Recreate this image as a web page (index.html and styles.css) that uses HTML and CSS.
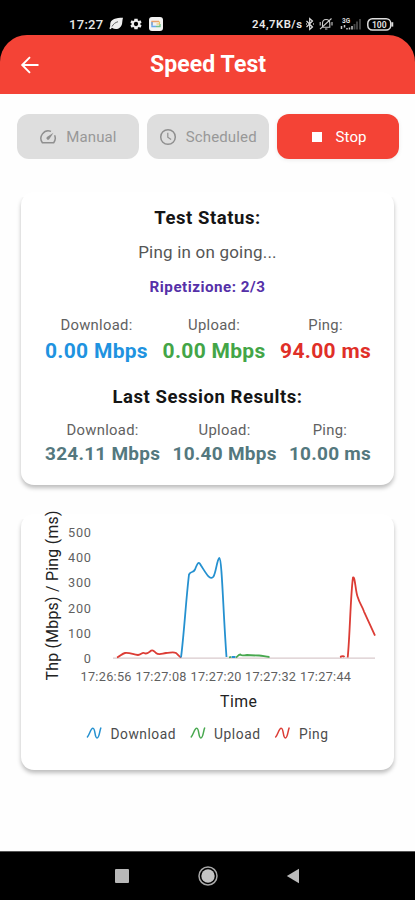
FILE: index.html
```html
<!DOCTYPE html>
<html lang="en">
<head>
<meta charset="utf-8">
<title>Speed Test</title>
<link rel="stylesheet" href="styles.css">
</head>
<body>
<div class="phone">
  <div class="statusbar">
    <div class="status-left">
      <span class="clock">17:27</span>
      <svg class="leaf" width="15" height="14" viewBox="0 0 15 14"><path d="M14 .8C7 .8 1.500 2 1.200 7.500c0 1.300.2 1.800-.9 4l1.500.7 1-1.500c4.500 2.700 9.500.7 10.300-4.300.3-1.800.3-3.500.9-5.600z" fill="#eee"/><path d="M3 9.500C4.300 7 6.300 5.500 9 4.700" stroke="#444" stroke-width=".8" fill="none"/></svg>
      <svg class="gear" width="14" height="14" viewBox="0 0 24 24"><path fill="#eee" fill-rule="evenodd" d="M19.400 13a7.500 7.500 0 0 0 0-2l2.200-1.700-2-3.600-2.700 1.100a8 8 0 0 0-1.700-1L14.800 3H9.200l-.4 2.800a8 8 0 0 0-1.700 1L4.400 5.700l-2 3.600L4.600 11a7.500 7.500 0 0 0 0 2l-2.200 1.700 2 3.600 2.700-1.100a8 8 0 0 0 1.700 1l.4 2.800h5.600l.4-2.800a8 8 0 0 0 1.700-1l2.700 1.100 2-3.600zM12 15.700a3.700 3.700 0 1 1 0-7.400 3.700 3.700 0 0 1 0 7.400z"/></svg>
      <svg class="app" width="14" height="14" viewBox="0 0 14 14"><rect width="14" height="14" rx="3" fill="#f2f2f2"/><path d="M3 8V4.500h7" stroke="#e9a06a" stroke-width="1.400" fill="none"/><path d="M3 5v4.500h4" stroke="#66a8ee" stroke-width="1.400" fill="none"/><path d="M7 9.500h4V7" stroke="#71c28c" stroke-width="1.400" fill="none"/><path d="M10.500 4.500V7H7.500" stroke="#e8c461" stroke-width="1.200" fill="none"/></svg>
    </div>
    <div class="status-right">
      <span class="rate">24,7KB/s</span>
      <svg class="bt" width="10" height="14" viewBox="0 0 10 14"><path d="M1.500 4l6 6L4.700 12.500v-11L7.500 4l-6 6" stroke="#ddd" stroke-width="1.200" fill="none"/><path d="M1 7h.8M8.200 7H9" stroke="#ddd" stroke-width="1.300"/></svg>
      <svg class="mute" width="14" height="14" viewBox="0 0 14 14"><path d="M3.500 10.200h7.300V6.500C10.800 3.800 9 2.500 7.100 2.500S3.500 3.800 3.500 6.500zM6 12h2.400M1 12.200L12.500 1.500M1.200 5v3.500M13 5v3.500" stroke="#ccc" stroke-width="1.100" fill="none"/></svg>
      <svg class="signal" width="22" height="14" viewBox="0 0 22 14"><text x="2" y="5.800" class="net">3G</text><path d="M1.500 9v3M4.500 8v2.500M7 11v1.500M9.500 10.500v2M12 9v3.500" stroke="#ccc" stroke-width="1.500"/><path d="M14.500 7v5.500M17 4.500v8M20 2v10.500" stroke="#444" stroke-width="1.900"/></svg>
      <svg class="battery" width="27" height="13" viewBox="0 0 27 13"><rect x=".8" y=".8" width="22.900" height="11.200" rx="4.500" fill="none" stroke="#ddd" stroke-width="1.500"/><path d="M25.300 4.200v4.400" stroke="#ddd" stroke-width="1.900"/><text x="12.200" y="9.700" class="pct">100</text></svg>
    </div>
  </div>

  <header class="appbar">
    <svg class="back" width="20" height="20" viewBox="0 0 20 20"><path d="M18.500 10H2.500M10 2.200L2.200 10l7.800 7.800" fill="none" stroke="#fff" stroke-width="1.900"/></svg>
    <h1>Speed Test</h1>
  </header>

  <main>
    <div class="actions">
      <button class="btn off"><svg width="18" height="18" viewBox="0 0 18 18"><path d="M15.600 7.200a7.400 7.400 0 0 1-.9 7.500H3.400A7.400 7.400 0 0 1 12 3.400" fill="none" stroke="#8f8f8f" stroke-width="1.500" stroke-linejoin="round"/><path d="M14.500 4.800L10.200 11.200a1.500 1.500 0 0 1-2.300-2.200z" fill="#8f8f8f"/></svg><span>Manual</span></button>
      <button class="btn off"><svg width="18" height="18" viewBox="0 0 18 18"><circle cx="9" cy="9" r="7.300" fill="none" stroke="#8f8f8f" stroke-width="1.500"/><path d="M8.800 4.800v4.500l3.300 2.200" fill="none" stroke="#8f8f8f" stroke-width="1.200"/></svg><span>Scheduled</span></button>
      <button class="btn stop"><i class="square"></i><span>Stop</span></button>
    </div>

    <section class="card status">
      <h2>Test Status:</h2>
      <p class="message">Ping in on going...</p>
      <p class="repeat">Ripetizione: 2/3</p>
      <div class="metrics live">
        <div><span class="label">Download:</span><b class="down">0.00 Mbps</b></div>
        <div><span class="label">Upload:</span><b class="up">0.00 Mbps</b></div>
        <div><span class="label">Ping:</span><b class="ping">94.00 ms</b></div>
      </div>
      <h2 class="last-title">Last Session Results:</h2>
      <div class="metrics last">
        <div><span class="label">Download:</span><b>324.11 Mbps</b></div>
        <div><span class="label">Upload:</span><b>10.40 Mbps</b></div>
        <div><span class="label">Ping:</span><b>10.00 ms</b></div>
      </div>
    </section>

    <section class="card chart">
      <svg width="373" height="256" viewBox="21 514.500 373 256">
        <text class="axis-title" transform="translate(57.500 681) rotate(-90)" textLength="170">Thp (Mbps) / Ping (ms)</text>
        <g class="ticks-y">
          <text x="91" y="537.500" textLength="23">500</text>
          <text x="91" y="562.700" textLength="23">400</text>
          <text x="91" y="587.900" textLength="23">300</text>
          <text x="91" y="613.100" textLength="23">200</text>
          <text x="91" y="638.300" textLength="23">100</text>
          <text x="91" y="663.500">0</text>
        </g>
        <path class="axis" d="M113 658.600H375"/>
        <path class="line red" d="M117 658C120 657 122 654 125 653.500C130 653 133 655 138 655.500C141 655 142 653 144 653.500C147 655 148 653.500 150 652C152 650 154 651 156 653.500C159 656 162 654 166 653.500C170 653.500 173 652 176 653.500C178 655 179 657 181 658"/>
        <path class="line blue" d="M181 658C184 635 186 600 189 575C191 571 193 574 195 570C198 562 199 562 201 566C205 572 210 582 213.500 577C216 573 217 560 219.300 558.500C222 559 223 610 226.500 657.500M231.500 657.500h4"/>
        <path class="line green" d="M229 658L231 657.300M236 658C238 657 238 655 240.500 655C242 657 244 655.500 247 655.500C251 656 255 656 259 656C263 656 265 657.500 269.500 657.500"/>
        <path class="line red" d="M340 657.500C342 657 343 655.500 344.500 657.500M347.700 658C350 635 350.500 595 353 578C355 576 355.500 592 357.500 597C360 605 362 606 364 612L375 636"/>
        <g class="ticks-x">
          <text x="106" y="681" textLength="51">17:26:56</text>
          <text x="161" y="681" textLength="51">17:27:08</text>
          <text x="216" y="681" textLength="51">17:27:20</text>
          <text x="270.500" y="681" textLength="51">17:27:32</text>
          <text x="325.500" y="681" textLength="51">17:27:44</text>
        </g>
        <text class="axis-title" x="220" y="707" textLength="37">Time</text>
        <g class="marks">
          <path class="blue" d="M87 738C89.500 736 90.500 728.500 93 728.800C95.500 729 94.500 738.500 97 738.500C99.500 738.500 99.500 731 101 728"/>
          <path class="green" d="M190.800 738C193.300 736 194.300 728.500 196.800 728.800C199.300 729 198.300 738.500 200.800 738.500C203.300 738.500 203.300 731 204.800 728"/>
          <path class="red" d="M275.300 738C277.800 736 278.800 728.500 281.300 728.800C283.800 729 282.800 738.500 285.300 738.500C287.800 738.500 287.800 731 289.300 728"/>
        </g>
        <g class="legend">
          <text x="110.500" y="739" textLength="65">Download</text>
          <text x="214" y="739" textLength="46">Upload</text>
          <text x="299" y="739" textLength="29">Ping</text>
        </g>
      </svg>
    </section>
  </main>

  <nav class="navbar">
    <svg width="14" height="14" viewBox="0 0 14 14"><rect width="14" height="14" rx="1" fill="#b8b8b8"/></svg>
    <svg width="20" height="20" viewBox="0 0 20 20"><circle cx="10" cy="10" r="9" fill="none" stroke="#a8a8a8" stroke-width="1.500"/><circle cx="10" cy="10" r="6.700" fill="#c4c4c4"/></svg>
    <svg width="14" height="16" viewBox="0 0 14 16"><path d="M.8 8L13 .8v14.400z" fill="#bbb"/></svg>
  </nav>
</div>
</body>
</html>
```

FILE: styles.css
```css
* { box-sizing: border-box; margin: 0; padding: 0; }
body { width: 415px; height: 900px; background: #000; font-family: Roboto, sans-serif; overflow: hidden; }
svg { display: block; flex: none; }
.phone { width: 415px; height: 900px; display: flex; flex-direction: column; }

.statusbar { height: 35px; padding: 12px 21px 0 69px; display: flex; justify-content: space-between; color: #e8e8e8; }
.status-left, .status-right { display: flex; align-items: center; height: 24px; }
.clock { font-size: 13px; font-weight: 500; letter-spacing: .3px; width: 40px; }
.gear { margin-left: 5px; }
.app { margin-left: 6px; }
.rate { font-size: 11.300px; font-weight: 600; letter-spacing: .5px; width: 53px; white-space: nowrap; }
.mute { margin-left: 4px; }
.signal { margin-left: 7px; }
.battery { margin-left: 5px; }
.net { font-size: 6.500px; font-weight: 700; fill: #ddd; }
.pct { font-size: 8.500px; font-weight: 700; fill: #ddd; text-anchor: middle; }

.appbar { height: 59px; flex: none; background: #f44336; border-radius: 27px 27px 0 0; display: flex; align-items: center; padding-left: 20px; }
.back { margin-right: 110px; }
h1 { font-size: 23px; line-height: 30px; font-weight: 700; letter-spacing: .1px; color: #fff; white-space: nowrap; }

main { height: 757px; background: #fefefe; padding: 20px 16.500px 0 17px; }
.actions { display: grid; grid-template-columns: repeat(3, 1fr); gap: 8px; height: 45px; }
.btn { border: 0; border-radius: 12px; display: flex; align-items: center; justify-content: center; gap: 9px; font: 400 15px/18px Roboto, sans-serif; letter-spacing: .15px; }
.off { background: #dedede; color: #989898; }
.stop { background: #f44336; color: #fff; gap: 13px; box-shadow: 0 1px 4px rgba(0, 0, 0, .08); }
.square { width: 10px; height: 10px; background: #fff; margin-left: 4px; }

.card { position: relative; width: 373px; margin-left: 4px; background: #fff; border-radius: 13px; }
.card::before { content: ""; position: absolute; inset: 0; border-radius: 13px; box-shadow: 0 3px 4px rgba(0, 0, 0, .26); clip-path: inset(5px -10px -12px -10px); }
.status { height: 293px; margin-top: 33px; padding: 14px 22px 0; text-align: center; }
h2 { font-size: 18.500px; line-height: 24px; font-weight: 700; letter-spacing: .55px; color: #151515; }
.message { margin-top: 11px; font-size: 17px; line-height: 22px; letter-spacing: .2px; color: #555; }
.repeat { margin-top: 14px; font-size: 15.200px; line-height: 20px; font-weight: 700; letter-spacing: .5px; color: #5530a8; }
.metrics { display: flex; justify-content: space-between; margin-left: 2px; margin-right: 1px; }
.metrics div { display: flex; flex-direction: column; align-items: center; }
.label { font-size: 14.800px; line-height: 18px; letter-spacing: .3px; color: #616161; }
.metrics b { white-space: nowrap; }
.live { margin-top: 19px; }
.live b { font-size: 21px; line-height: 26px; letter-spacing: .3px; margin-top: 4px; }
.down { color: #1f93e0; }
.up { color: #43a547; }
.ping { color: #e02f28; }
.last-title { margin-top: 21px; }
.last { margin-top: 12px; }
.last b { font-size: 19px; line-height: 24px; letter-spacing: .25px; margin-top: 3px; color: #54787e; }

.chart { height: 256px; margin-top: 29px; }
.chart svg { overflow: visible; }
.axis-title { font-size: 15.800px; fill: #222; }
.ticks-y text, .ticks-x text { font-size: 12.700px; fill: #5f5f5f; }
.ticks-y text { text-anchor: end; }
.ticks-x text { text-anchor: middle; }
.axis { stroke: #cfbcbf; stroke-width: 1; }
.line { fill: none; stroke-width: 1.800; stroke-linejoin: round; }
.blue { stroke: #2591d0; }
.green { stroke: #48a84f; }
.red { stroke: #dc3c35; }
.marks path { fill: none; stroke-width: 1.500; }
.legend text { font-size: 13.800px; fill: #4c4c4c; }

.navbar { height: 49px; background: #000; border-top: 1px solid #555; display: flex; align-items: center; justify-content: space-between; padding: 0 115px 0 115px; }
```
